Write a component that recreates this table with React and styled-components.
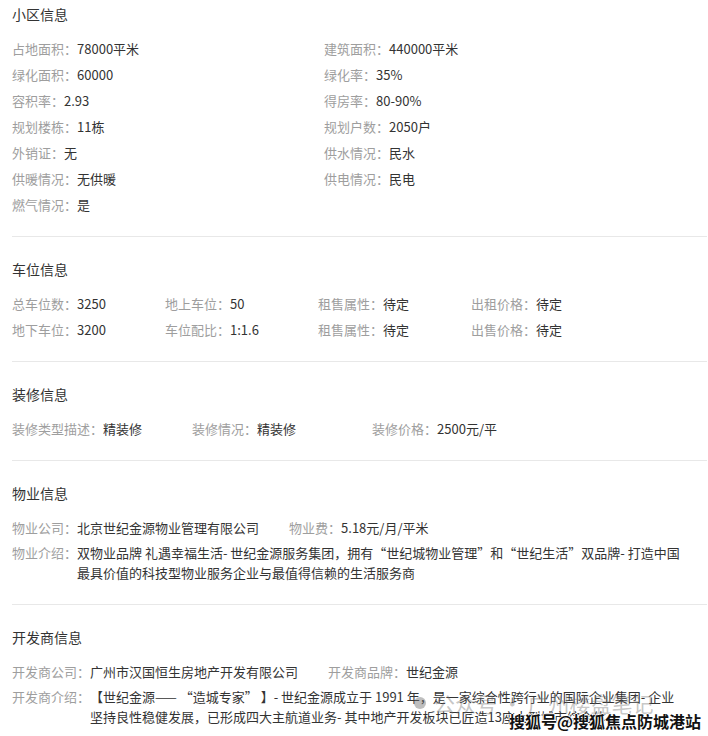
import styled, { createGlobalStyle } from "styled-components";

const Global = createGlobalStyle`
  body {
    margin: 0;
    background: #fff;
    font-family: "Noto Sans CJK SC", "Noto Sans", sans-serif;
  }
`;

const Page = styled.div`
  position: relative;
  padding: 0 1px 0 12px;
  font-size: 13px;
  color: #333;
`;

const Section = styled.section`
  padding: 22px 0 18px;
  border-bottom: 1px solid #e8e8e8;

  &:first-child {
    padding-top: 4px;
  }
`;

const Title = styled.h3`
  margin: 0 0 12px;
  font-size: 14px;
  font-weight: normal;
  line-height: 20px;
  color: #333;
`;

const Grid = styled.div`
  display: grid;
  grid-template-columns: repeat(${(p) => p.$cols}, ${(p) => p.$width}px);
`;

const Line = styled.div`
  display: flex;
  gap: 30px;
`;

const Field = styled.div`
  line-height: 26px;
  white-space: nowrap;
`;

const Label = styled.span`
  color: #9e9e9e;
`;

const Value = styled.span`
  color: #333;
`;

const Intro = styled.div`
  display: flex;
  padding: 2px 10px 3px 0;
  line-height: 20px;
`;

const IntroLabel = styled.span`
  flex: none;
  color: #9e9e9e;
`;

const IntroText = styled.span`
  color: #333;
`;

const Faint = styled.div`
  position: absolute;
  top: 688px;
  left: 414px;
  display: flex;
  align-items: center;
  gap: 8px;
  font-size: 21px;
  color: rgba(110, 110, 110, 0.4);
  white-space: nowrap;
  pointer-events: none;
`;

const Dot = styled.span`
  width: 12px;
  height: 12px;
  border-radius: 50%;
  background: rgba(110, 110, 110, 0.45);
`;

const Mark = styled.div`
  position: absolute;
  top: 709px;
  left: 509px;
  font-size: 16px;
  font-weight: bold;
  color: #111;
  white-space: nowrap;
  text-shadow: 1px 0 0 #fff, -1px 0 0 #fff, 0 1px 0 #fff, 0 -1px 0 #fff;
  pointer-events: none;
`;

const estate = [
  ["占地面积", "78000平米"],
  ["建筑面积", "440000平米"],
  ["绿化面积", "60000"],
  ["绿化率", "35%"],
  ["容积率", "2.93"],
  ["得房率", "80-90%"],
  ["规划楼栋", "11栋"],
  ["规划户数", "2050户"],
  ["外销证", "无"],
  ["供水情况", "民水"],
  ["供暖情况", "无供暖"],
  ["供电情况", "民电"],
  ["燃气情况", "是"],
];

const parking = [
  ["总车位数", "3250"],
  ["地上车位", "50"],
  ["租售属性", "待定"],
  ["出租价格", "待定"],
  ["地下车位", "3200"],
  ["车位配比", "1:1.6"],
  ["租售属性", "待定"],
  ["出售价格", "待定"],
];

const decoration = [
  ["装修类型描述", "精装修"],
  ["装修情况", "精装修"],
  ["装修价格", "2500元/平"],
];

function Item({ label, value }) {
  return (
    <Field>
      <Label>{label}：</Label>
      <Value>{value}</Value>
    </Field>
  );
}

export default function App() {
  return (
    <Page>
      <Global />
      <Section>
        <Title>小区信息</Title>
        <Grid $cols={2} $width={312}>
          {estate.map(([l, v]) => (
            <Item key={l} label={l} value={v} />
          ))}
        </Grid>
      </Section>

      <Section>
        <Title>车位信息</Title>
        <Grid $cols={4} $width={153}>
          {parking.map(([l, v], i) => (
            <Item key={i} label={l} value={v} />
          ))}
        </Grid>
      </Section>

      <Section>
        <Title>装修信息</Title>
        <Grid $cols={3} $width={180}>
          {decoration.map(([l, v]) => (
            <Item key={l} label={l} value={v} />
          ))}
        </Grid>
      </Section>

      <Section>
        <Title>物业信息</Title>
        <Line>
          <Item label="物业公司" value="北京世纪金源物业管理有限公司" />
          <Item label="物业费" value="5.18元/月/平米" />
        </Line>
        <Intro>
          <IntroLabel>物业介绍：</IntroLabel>
          <IntroText>
            双物业品牌 礼遇幸福生活- 世纪金源服务集团，拥有“世纪城物业管理”和“世纪生活”双品牌- 打造中国
            <br />
            最具价值的科技型物业服务企业与最值得信赖的生活服务商
          </IntroText>
        </Intro>
      </Section>

      <Section>
        <Title>开发商信息</Title>
        <Line>
          <Item label="开发商公司" value="广州市汉国恒生房地产开发有限公司" />
          <Item label="开发商品牌" value="世纪金源" />
        </Line>
        <Intro>
          <IntroLabel>开发商介绍：</IntroLabel>
          <IntroText>
            【世纪金源—— “造城专家” 】- 世纪金源成立于 1991 年，是一家综合性跨行业的国际企业集团- 企业
            <br />
            坚持良性稳健发展，已形成四大主航道业务- 其中地产开发板块已匠造13座大型城市综合体
          </IntroText>
        </Intro>
      </Section>

      <Faint>
        <Dot />
        公众号 · 广州楼盘笔记
      </Faint>
      <Mark>搜狐号@搜狐焦点防城港站</Mark>
    </Page>
  );
}
